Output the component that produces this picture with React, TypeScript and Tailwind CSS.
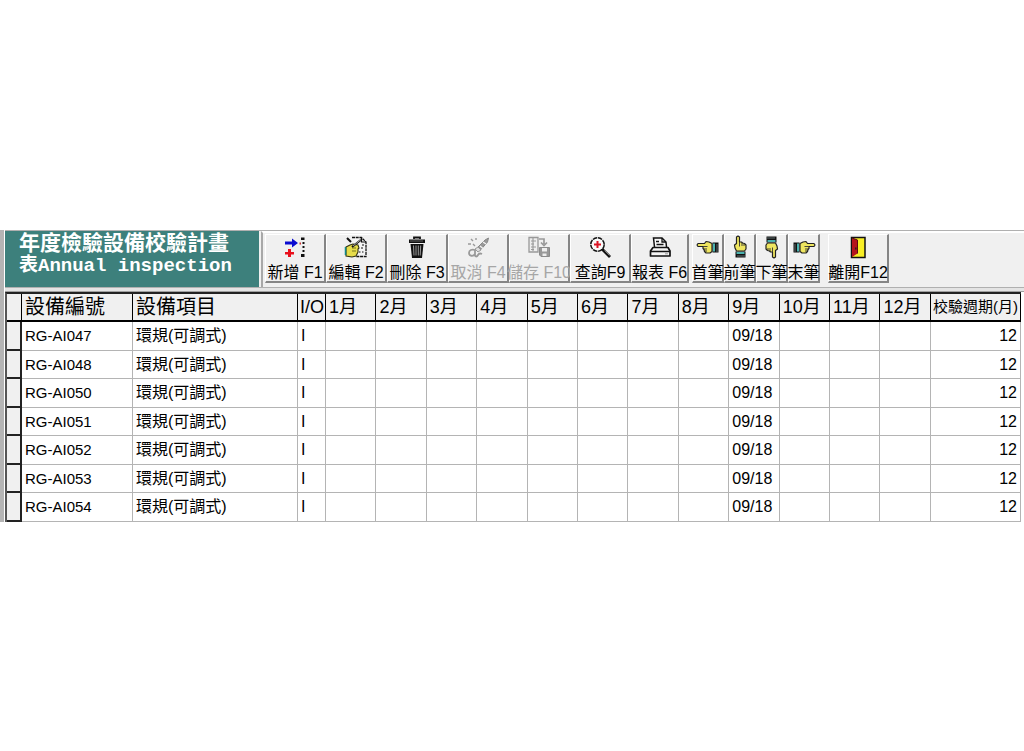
import type { ReactNode } from 'react';

const MONTHS = Array.from({ length: 12 }, (_, i) => i + 1);
const ROWS = ['RG-AI047', 'RG-AI048', 'RG-AI050', 'RG-AI051', 'RG-AI052', 'RG-AI053', 'RG-AI054'];

function Icon({ children }: { children: ReactNode }) {
  return (
    <svg viewBox="0 0 24 24" className="size-6 shrink-0" aria-hidden="true">
      {children}
    </svg>
  );
}

const AddIcon = () => (
  <Icon>
    <path d="M2 7h7V4l6 4.500L9 13v-3H2z" fill="#0a0ad0" transform="translate(0 -.5)" />
    <path d="M5 14h3v3h3v2.500H8V22H5v-2.500H2V17h3z" fill="#e8101c" />
    <path d="M18 2.500h3.500V5H18zM19.500 7h2v2h-2zM19.500 11h2v2h-2zM19.500 15h2v2h-2zM18 19h3.500v3H18z" fill="#111" />
    <path d="M16.500 7.500h1.500v2h-1.500z" fill="#c33" />
  </Icon>
);

const EditIcon = () => (
  <Icon>
    <path d="M8 2.500h9.500L22 7v14.500H12" fill="#f4f4f4" stroke="#111" strokeWidth="1.300" strokeDasharray="3 .7" />
    <path d="M17.500 2.500V7H22M15 17h1.500M18 17h1.500M17 13h2M18 10h2" fill="none" stroke="#111" strokeWidth="1.200" />
    <path d="M2 12l4-2 3-1 5 1 1 3-1 1 0 3-2 4-4 1-6-1z" fill="#e6dc4a" stroke="#333311" strokeWidth="1.100" />
    <path d="M8 13h4M8 16h4" stroke="#77761a" />
    <path d="M3 3l4 4M8 12L18 4" stroke="#111" strokeWidth="2" />
    <path d="M9 11l8-6.500" stroke="#ddd" strokeWidth=".7" />
    <path d="M1.500 12v8" stroke="#188" strokeWidth="1.500" />
  </Icon>
);

const TrashIcon = () => (
  <Icon>
    <path d="M9 4V2.500h6V4" fill="none" stroke="#111" strokeWidth="1.800" />
    <path d="M4 4.500h16v3.500H4z" fill="#111" />
    <path d="M5 6h13" stroke="#777" strokeWidth=".8" />
    <path d="M5.500 9h13L17 23H7z" fill="#111" />
    <path d="M8.500 10.500l.5 10M11 10.500v10M13.300 10.500v10M15.700 10.500l-.5 10" stroke="#aaa" strokeWidth=".9" />
  </Icon>
);

const CancelIcon = () => (
  <Icon>
    <path d="M12 12l7-7 3.500-2-1 4-6.500 7.500z" fill="#999" stroke="#888" />
    <path d="M14 11l3 2.500M17 7l3 2" stroke="#f4f4f4" strokeWidth="1.300" />
    <path d="M9 14l3-2 3 3-3 2z" fill="#ddd" stroke="#999" />
    <path d="M9 15c-3-1-6 0-6 3s4 4 6 1v-4 5c0 2 2 2 3 0s2-2 4-1" fill="none" stroke="#999" strokeWidth="1.800" />
    <path d="M5 4l2 2M2 9h3M7 9l2 2M10 3v2" stroke="#999" strokeWidth="1.400" />
  </Icon>
);

const SaveIcon = () => (
  <Icon>
    <path d="M2 2.500h9V17H2z" fill="#eee" stroke="#999" strokeWidth="1.300" />
    <path d="M4 6h5M4 9h3M4 12h5M4 14.500h3M6 3v13" stroke="#999" strokeWidth="1.100" />
    <path d="M12 4h5v5M14 7.500l3 3 3-3" fill="none" stroke="#999" strokeWidth="1.700" />
    <path d="M12.500 12.500h10v9h-8.500l-1.500-1.500z" fill="#999" stroke="#8b8b8b" />
    <path d="M15 13h5v3.500h-5zM15.500 18.500h4V21h-4z" fill="#eee" />
  </Icon>
);

const SearchIcon = () => (
  <Icon>
    <circle cx="9.500" cy="9.500" r="6.700" fill="#fafafa" stroke="#111" strokeWidth="1.500" strokeDasharray="4.500 .8" />
    <path d="M8.500 6h2v2.500H13v2h-2.500V13h-2v-2.500H6v-2h2.500z" fill="#dc1525" />
    <path d="M14 14l8 8" stroke="#111" strokeWidth="2.800" />
    <path d="M16.500 15.500l5 5" stroke="#999" strokeWidth=".8" />
  </Icon>
);

const PrintIcon = () => (
  <Icon>
    <path d="M6.500 12l-1-9h8.500l4 4 .5 5" fill="#f8f8f8" stroke="#111" strokeWidth="1.500" />
    <path d="M14 3v4h4M8 6.500h3M8.500 9.500h7" fill="none" stroke="#111" strokeWidth="1.300" />
    <path d="M5 12.500h15l2 3.500v5H2.500v-5z" fill="#f4f4f4" stroke="#111" strokeWidth="1.700" strokeLinejoin="round" />
    <path d="M3 16.500h19" stroke="#111" strokeWidth="1.500" />
    <path d="M17 18.800h3" stroke="#999" />
  </Icon>
);

function HandIcon({ transform }: { transform?: string }) {
  return (
    <Icon>
      <g transform={transform}>
        <path d="M1.500 7.500h6v10h-6z" fill="#111" />
        <path d="M5 8.500h2v8H5z" fill="#4bb3b0" />
        <path d="M3 9v8" stroke="#5f6f6f" />
        <path d="M8 8.500l3-1.500 3-.5 1.500 2H22l1 1.500-1 1.500h-5v2l-1 1-.5 2-1.500 1.500H10l-2-1.500z" fill="#efe660" stroke="#222" strokeWidth="1.200" strokeLinejoin="round" />
        <path d="M12.500 11.500H17M13 14h3.500M13 16h2" stroke="#333" strokeWidth=".9" />
      </g>
    </Icon>
  );
}

const ExitIcon = () => (
  <Icon>
    <path d="M5.500 2.500h13.500v20H5.500z" fill="#f8ee25" stroke="#111" strokeWidth="1.500" />
    <path d="M6 3l5.500 2v13.500L6 22z" fill="#b4141c" />
    <path d="M6 3l5.500 2v13.500" fill="none" stroke="#5a0a10" />
    <path d="M9 12.500h1.500v2H9z" fill="#222" />
  </Icon>
);

interface Action {
  label: string;
  icon: ReactNode;
  disabled?: boolean;
}

const MAIN: Action[] = [
  { label: '新增 F1', icon: <AddIcon /> },
  { label: '編輯 F2', icon: <EditIcon /> },
  { label: '刪除 F3', icon: <TrashIcon /> },
  { label: '取消 F4', icon: <CancelIcon />, disabled: true },
  { label: '儲存 F10', icon: <SaveIcon />, disabled: true },
  { label: '查詢F9', icon: <SearchIcon /> },
];

const PRINT: Action = { label: '報表 F6', icon: <PrintIcon /> };

const NAV: Action[] = [
  { label: '首筆', icon: <HandIcon transform="translate(24 0) scale(-1 1)" /> },
  { label: '前筆', icon: <HandIcon transform="rotate(-90 12 12)" /> },
  { label: '下筆', icon: <HandIcon transform="rotate(90 12 12)" /> },
  { label: '末筆', icon: <HandIcon /> },
];

const EXIT: Action = { label: '離開F12', icon: <ExitIcon /> };

function ToolButton({ action, width }: { action: Action; width: string }) {
  return (
    <button
      type="button"
      disabled={action.disabled}
      className={`${width} flex h-[49px] shrink-0 flex-col items-center border-t border-r-2 border-b-2 border-l border-t-white border-r-[#858585] border-b-[#858585] border-l-white bg-[#f0f0f0] text-base leading-7 whitespace-nowrap text-black disabled:text-[#a6a6a6]`}
    >
      {action.icon}
      <span>{action.label}</span>
    </button>
  );
}

const HEAD = 'border-r border-b-2 border-black bg-[#f0f0f0] text-left font-normal whitespace-nowrap leading-6';
const CELL = 'border-r border-b border-[#b4b4b4] px-[3px] whitespace-nowrap leading-6';

export default function App() {
  return (
    <div className="min-h-screen bg-white pt-[230px] font-['Liberation_Sans','Noto_Sans_CJK_TC',sans-serif] text-black">
      <main className="border-l-4 border-[#b4b4b4] bg-white pl-px">
        <header className="flex h-[58px] border-t border-b border-[#b0b0b0] bg-[#f0f0f0]">
          <h1 className="w-[254px] shrink-0 bg-[#3d807c] pt-1 pl-[14px] font-['Liberation_Mono','Noto_Sans_CJK_TC',monospace] leading-5 font-bold whitespace-nowrap text-white">
            <span className="text-[21px]">年度檢驗設備校驗計畫</span>
            <br />
            <span className="text-[19px]">表Annual inspection</span>
          </h1>
          <div className="ml-[2px] flex grow border-t-2 border-l-2 border-white border-l-[#a8a8a8] pt-px pl-[2px]">
            <div className="flex">
              {MAIN.map((a) => (
                <ToolButton key={a.label} action={a} width="w-[61px]" />
              ))}
              <ToolButton action={PRINT} width="w-[58px]" />
            </div>
            <div className="mr-2 ml-[3px] flex">
              {NAV.map((a) => (
                <ToolButton key={a.label} action={a} width="w-8" />
              ))}
            </div>
            <ToolButton action={EXIT} width="w-[61px]" />
          </div>
        </header>
        <div className="h-1 border-b border-[#a0a0a0] bg-[#e4e4e4]" />
        <div className="pr-[3px]">
          <table className="w-full table-fixed border-separate border-spacing-0 border-t-2 border-l-2 border-t-[#222] border-l-[#555]">
            <colgroup>
              <col className="w-[15px]" />
              <col className="w-[111px]" />
              <col className="w-[165px]" />
              <col className="w-[28px]" />
              {MONTHS.map((m) => (
                <col key={m} />
              ))}
              <col className="w-[90px]" />
            </colgroup>
            <thead>
              <tr className="h-7">
                <th className={HEAD} aria-label="列" />
                <th className={`${HEAD} px-[3px] text-xl`}>設備編號</th>
                <th className={`${HEAD} px-[3px] text-xl`}>設備項目</th>
                <th className={`${HEAD} pl-[2px] text-lg`}>I/O</th>
                {MONTHS.map((m) => (
                  <th key={m} className={`${HEAD} px-[3px] text-lg`}>
                    {m}月
                  </th>
                ))}
                <th className={`${HEAD} pl-[2px] text-[15px]`}>校驗週期(月)</th>
              </tr>
            </thead>
            <tbody>
              {ROWS.map((id) => (
                <tr key={id} className="h-7 odd:h-[29px]">
                  <td className="border-r-2 border-b-2 border-[#222] bg-[#f0f0f0]" />
                  <td className={`${CELL} text-[15px]`}>{id}</td>
                  <td className={`${CELL} text-base`}>環規(可調式)</td>
                  <td className={`${CELL} text-base`}>I</td>
                  {MONTHS.map((m) => (
                    <td key={m} className={`${CELL} text-base`}>
                      {m === 9 ? '09/18' : ''}
                    </td>
                  ))}
                  <td className={`${CELL} text-right text-base`}>12</td>
                </tr>
              ))}
            </tbody>
          </table>
        </div>
      </main>
    </div>
  );
}
